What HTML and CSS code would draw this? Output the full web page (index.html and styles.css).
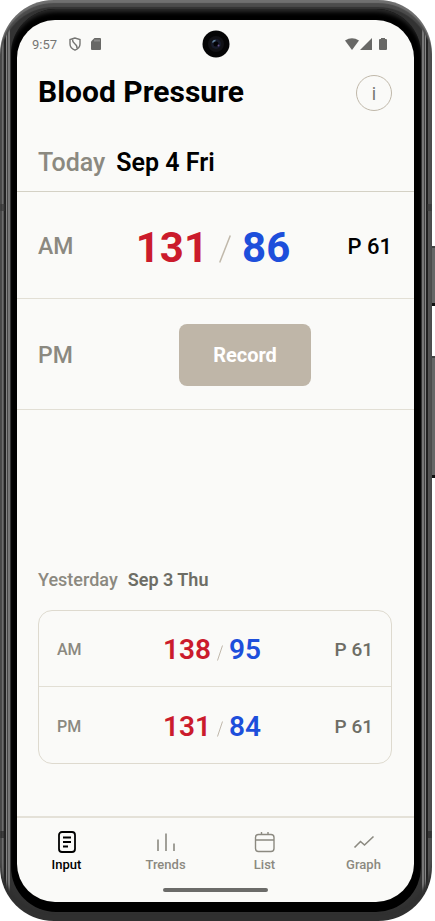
FILE: index.html
```html
<!DOCTYPE html>
<html lang="en">
<head>
<meta charset="utf-8">
<meta name="viewport" content="width=device-width, initial-scale=1">
<title>Blood Pressure</title>
<link rel="stylesheet" href="styles.css">
</head>
<body>
<div class="device">
  <span class="side-key power"></span>
  <span class="side-key volume"></span>
  <div class="rim">
    <div class="bezel">
      <div class="screen">
        <header class="status">
          <span class="clock">9:57</span>
          <svg class="status-icon" viewBox="0 0 12 14" width="12" height="14" fill="none" stroke="#757573" stroke-width="1.4"><path d="M6 1 1 2.600V7c0 2.800 2 5 5 6.200C9 12 11 9.800 11 7V2.600z"/><path d="M3.500 2.500c-.5 4.500 5.500 4 4.500 9"/></svg>
          <svg class="card-icon" viewBox="0 0 10 12" width="10" height="12"><path d="M3.500 0H9a1 1 0 0 1 1 1v10a1 1 0 0 1-1 1H1a1 1 0 0 1-1-1V3.500z" fill="#686866"/><path d="M4 1.500v2M6 1.500v2M8 1.500v2" stroke="#aaa"/></svg>
          <svg class="camera" viewBox="0 0 28 28" width="28" height="28"><circle cx="14" cy="14" r="13.500" fill="#050506"/><circle cx="14" cy="14" r="8" fill="#111115"/><circle cx="14" cy="14" r="5" fill="#171b2b"/><circle cx="14" cy="14" r="2.500" fill="#030305"/><path d="M10.500 12.500q1-2 3-2" stroke="#60829c" stroke-width="1.300" fill="none"/><circle cx="16.500" cy="15.500" r="1" fill="#66518c"/></svg>
          <svg class="signals" viewBox="0 0 42 12" width="42" height="12" fill="#686866"><path d="M0 2.500Q7-2 14 2.500L7 12z"/><path d="M27 0v12H15z"/><path d="M35 1h1V0h4v1h1q1 0 1 1v9q0 1-1 1h-6q-1 0-1-1V2q0-1 1-1z"/></svg>
        </header>
        <main>
          <div class="title-row">
            <h1>Blood Pressure</h1>
            <button class="info" type="button" aria-label="Information">i</button>
          </div>
          <section>
            <h2 class="day today"><span>Today</span> Sep 4 Fri</h2>
            <div class="entry morning">
              <span class="period">AM</span>
              <span class="reading"><b class="sys">131</b><svg class="slash" viewBox="0 0 12 28"><path d="M11.300.5.700 27.500"/></svg><b class="dia">86</b></span>
              <span class="pulse">P 61</span>
            </div>
            <div class="entry evening">
              <span class="period">PM</span>
              <button class="record" type="button">Record</button>
            </div>
          </section>
          <section class="previous">
            <h2 class="day yesterday"><span>Yesterday</span> Sep 3 Thu</h2>
            <div class="history">
              <div class="entry">
                <span class="period">AM</span>
                <span class="reading"><b class="sys">138</b><svg class="slash" viewBox="0 0 6 16"><path d="M5.500.5.500 15.500"/></svg><b class="dia">95</b></span>
                <span class="pulse">P 61</span>
              </div>
              <div class="entry">
                <span class="period">PM</span>
                <span class="reading"><b class="sys">131</b><svg class="slash" viewBox="0 0 6 16"><path d="M5.500.5.500 15.500"/></svg><b class="dia">84</b></span>
                <span class="pulse">P 61</span>
              </div>
            </div>
          </section>
        </main>
        <nav>
          <a class="active" href="#input"><svg viewBox="0 0 24 24" width="24" height="24"><rect x="4" y="2" width="16" height="20" rx="3" stroke-width="1.800"/><path d="M8 7.500h8M8 12h8M8 16.500h5" stroke-width="1.800"/></svg>Input</a>
          <a href="#trends"><svg viewBox="0 0 24 24" width="24" height="24"><path d="M4 9.500V21M12 3.500V21M20 13.500V21" stroke-width="1.600"/></svg>Trends</a>
          <a href="#list"><svg viewBox="0 0 24 24" width="24" height="24"><rect x="2.500" y="4.500" width="18.500" height="17" rx="3"/><path d="M2.500 10H21M8.500 2v2.500M15 2v2.500"/></svg>List</a>
          <a href="#graph"><svg viewBox="0 0 24 24" width="24" height="24"><path d="m2.500 17.500 6-6 4 3.500 9-8.500" stroke-width="1.600"/></svg>Graph</a>
        </nav>
        <div class="home-bar"></div>
      </div>
    </div>
  </div>
</div>
</body>
</html>
```
FILE: styles.css
```css
* { box-sizing: border-box; }

body {
  margin: 0;
  background: #fff;
  color: #000;
  font-family: Roboto, sans-serif;
}

/* Phone shell */
.device {
  position: relative;
  display: flex;
  min-height: 100vh;
  padding-right: 3px;
}
.side-key {
  position: absolute;
  right: 0;
  width: 4px;
  background: #666;
  border-top: 2px solid #444;
  border-bottom: 3px solid #111;
}
.power { top: 246px; height: 60px; }
.volume { top: 356px; height: 122px; }
.rim {
  position: relative;
  flex: 1;
  display: flex;
  padding: 9px 11px;
  border-radius: 54px;
  background:
    linear-gradient(#3339, #3339) 0 204px / 5px 7px no-repeat,
    linear-gradient(#3339, #3339) 100% 204px / 5px 7px no-repeat,
    linear-gradient(#2229, #2229) 0 831px / 5px 7px no-repeat,
    linear-gradient(#2229, #2229) 100% 831px / 5px 7px no-repeat,
    linear-gradient(90deg, #505050 0 2px, #707070 2px 3px, #555 3px 4px, #222 4px 6px, #858585 6px 7px, #454545 7px 8px, #777 8px 10px, #333 10px calc(100% - 10px), #777 calc(100% - 10px) calc(100% - 8px), #454545 calc(100% - 8px) calc(100% - 7px), #858585 calc(100% - 7px) calc(100% - 6px), #222 calc(100% - 6px) calc(100% - 4px), #555 calc(100% - 4px));
  box-shadow: inset 0 3px 1px #707070, inset 0 7px 1px #4c4c4c, inset 0 -9px 3px #303030;
}
.bezel {
  flex: 1;
  display: flex;
  padding: 11px 7px 10px 6px;
  border-radius: 45px;
  background: #000;
  box-shadow: inset 0 5px 4px -2px #2b2b2b;
}
.screen {
  flex: 1;
  display: flex;
  flex-direction: column;
  overflow: hidden;
  border-radius: 38px;
  background: #fafaf8;
}

/* Status bar */
.status {
  position: relative;
  display: flex;
  align-items: center;
  height: 48px;
  padding: 0 27px 0 15px;
  color: #757573;
}
.clock { font-size: 13px; }
.status-icon { margin-left: 12px; }
.card-icon { margin-left: 10px; }
.camera { position: absolute; left: 50%; transform: translateX(-50%); }
.signals { margin-left: auto; }

/* Content */
main {
  flex: 1;
  display: flex;
  flex-direction: column;
}
h1, h2 { margin: 0; }
.title-row {
  display: flex;
  align-items: center;
  justify-content: space-between;
  height: 50px;
  padding: 0 22px 0 21px;
}
h1 { padding-bottom: 4px; font-size: 30px; font-weight: 700; }
.info {
  width: 36px;
  height: 36px;
  padding: 0;
  border: 1px solid #c0b8aa;
  border-radius: 50%;
  background: none;
  color: #77776f;
  font: 400 18px Roboto, sans-serif;
}
.day { padding: 0 21px; font-weight: 600; }
.day span { color: #8b8980; font-weight: 500; }
.today {
  display: flex;
  align-items: center;
  gap: 11px;
  height: 74px;
  padding-top: 16px;
  font-size: 25px;
  border-bottom: 1px solid #d4d1c5;
}
.entry {
  display: grid;
  grid-template-columns: 60px 1fr 64px;
  align-items: center;
  padding: 2px 22px 0 21px;
  border-bottom: 1px solid #e2dfd5;
}
.morning { height: 107px; }
.evening { height: 111px; grid-template-columns: 60px 1fr; }
.period { color: #8b8980; font-size: 23px; font-weight: 500; }
.reading {
  display: flex;
  align-items: center;
  justify-content: center;
  gap: 11px;
  padding-top: 2px;
  font-size: 42px;
}
.reading b { font-weight: 700; }
.sys { color: #cb1b2c; }
.dia { color: #1d4fdb; }
.slash {
  width: 12px;
  height: 28px;
  margin-top: 4px;
  fill: none;
  stroke: #c0b8aa;
  stroke-width: 1.5;
}
.pulse { font-size: 22px; font-weight: 500; text-align: right; }
.record {
  justify-self: center;
  width: 132px;
  height: 62px;
  border: 0;
  border-radius: 8px;
  background: #bfb6a8;
  color: #fff;
  font: 700 20px Roboto, sans-serif;
}
.previous { margin-top: auto; padding-bottom: 52px; }
.yesterday {
  display: flex;
  gap: 10px;
  color: #6d6d65;
  font-size: 18px;
  line-height: 22px;
}
.history {
  margin: 19px 22px 0 21px;
  border: 1px solid #dedacf;
  border-radius: 14px;
}
.history .entry {
  grid-template-columns: 64px 1fr 70px;
  height: 76px;
  padding: 2px 18px 0;
}
.history .entry:last-child { border-bottom: 0; }
.history .period { font-size: 16px; }
.history .reading { gap: 6px; padding-top: 0; font-size: 28px; }
.history .reading b { font-weight: 600; }
.history .slash { width: 6px; height: 16px; margin-top: 6px; stroke-width: 1; }
.history .pulse { color: #6d6d65; font-size: 19px; font-weight: 500; }

/* Navigation */
nav {
  display: flex;
  height: 70px;
  padding: 12px 1px 0 0;
  border-top: 2px solid #e4e1d8;
}
nav a {
  flex: 1;
  display: flex;
  flex-direction: column;
  align-items: center;
  gap: 3px;
  color: #8b8980;
  font-size: 13px;
  font-weight: 500;
  text-decoration: none;
}
nav svg { fill: none; stroke: currentColor; stroke-width: 1.4; }
nav .active { color: #000; }
.home-bar {
  width: 105px;
  height: 4px;
  margin: 2px auto 10px;
  border-radius: 2px;
  background: #6b6b69;
}
```
